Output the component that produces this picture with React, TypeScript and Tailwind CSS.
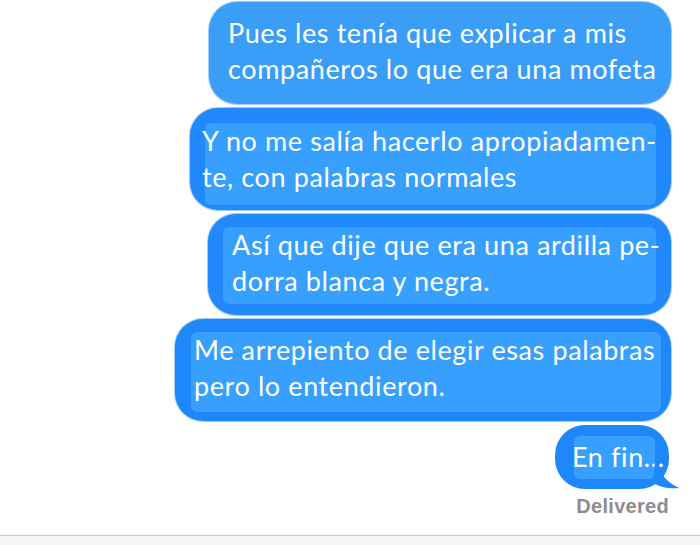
import React from "react";

type Msg = {
  lines: string[];
  outer: string;
  inner: string;
  text: string;
};

const messages: Msg[] = [
  {
    lines: ["Pues les tenía que explicar a mis", "compañeros lo que era una mofeta"],
    outer: "w-[462px] h-[102px] pt-[13px] pl-[19px] bg-[#3a9ef9]",
    inner: "",
    text: "",
  },
  {
    lines: ["Y no me salía hacerlo apropiadamen-", "te, con palabras normales"],
    outer: "w-[481px] h-[102px] pt-[12px] pl-[15px] pr-[15px] bg-[#2189fb]",
    inner: "h-[82px] bg-[#37a0ff] rounded-md",
    text: "-ml-[3px] mt-[3px]",
  },
  {
    lines: ["Así que dije que era una ardilla pe-", "dorra blanca y negra."],
    outer: "w-[463px] h-[101px] pt-[14px] pl-[15px] pr-[15px] bg-[#2189fb]",
    inner: "h-[77px] bg-[#37a0ff] rounded-md",
    text: "ml-[9px] -mt-[1px]",
  },
  {
    lines: ["Me arrepiento de elegir esas palabras", "pero lo entendieron."],
    outer: "w-[496px] h-[102px] pt-[14px] pl-[16px] pr-[10px] bg-[#1e88fa]",
    inner: "h-[80px] bg-[#37a0ff] rounded-md",
    text: "ml-[3px] -mt-[1px]",
  },
];

function Bubble({ msg }: { msg: Msg }) {
  return (
    <div className={`rounded-[28px] ring-1 ring-[#1a80ee]/40 ${msg.outer}`}>
      <div className={msg.inner}>
        <div className={`text-white text-[27px] leading-[36px] tracking-[0.6px] whitespace-nowrap ${msg.text}`}>
          {msg.lines.map((l) => (
            <div key={l}>{l}</div>
          ))}
        </div>
      </div>
    </div>
  );
}

export default function App() {
  return (
    <div className="w-[700px] h-[545px] bg-white flex flex-col overflow-hidden font-['Lato',sans-serif]">
      <div className="flex-1 flex flex-col items-end gap-[4px] pt-[2px] pr-[29px]">
        {messages.map((m, i) => (
          <Bubble key={i} msg={m} />
        ))}

        <div className="relative w-[114px] h-[64px] mr-[2px] rounded-[30px] bg-[#1e88fa] pt-[11px] pl-[19px] pr-[14px]">
          <div className="h-[43px] bg-[#37a0ff] rounded-md">
            <div className="text-white text-[27px] leading-[36px] tracking-[0.6px] whitespace-nowrap -ml-[2px] pt-[3px]">
              En fin...
            </div>
          </div>
          <svg
            className="absolute right-[-10px] bottom-0"
            width="26"
            height="28"
            viewBox="0 0 26 28"
          >
            <path
              d="M2 0 C7 12 13 21 26 27 C19 28 9 27 0 22 Z"
              fill="#1e88fa"
            />
          </svg>
        </div>

        <div className="mt-[1px] mr-[2px] text-[20px] leading-[24px] tracking-[0.3px] font-semibold text-[#8c8c91] font-['Liberation_Sans',sans-serif]">
          Delivered
        </div>
      </div>
      <div className="h-[10px] border-t border-[#c9c9c9] bg-[#f5f5f5]" />
    </div>
  );
}
